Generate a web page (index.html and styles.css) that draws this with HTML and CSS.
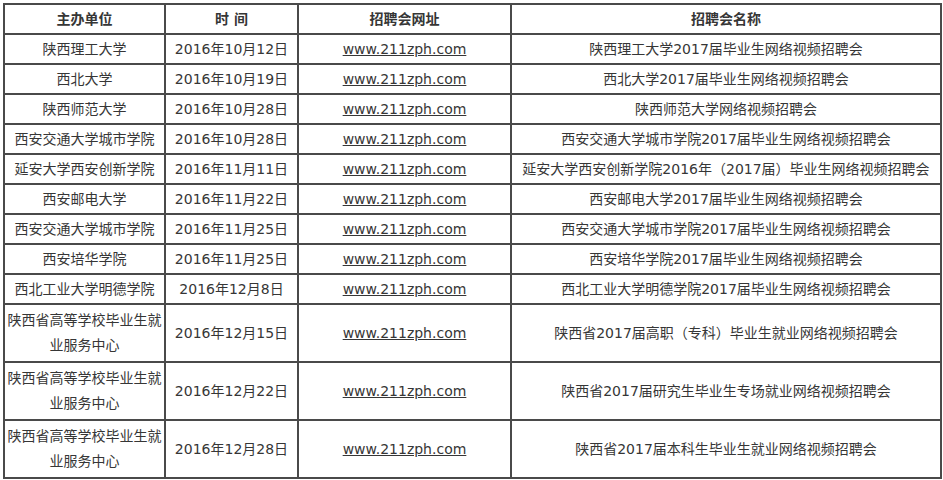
FILE: index.html
```html
<!DOCTYPE html>
<html lang="zh-CN">
<head>
<meta charset="utf-8">
<title>招聘会</title>
<link rel="stylesheet" href="styles.css">
</head>
<body>
<table class="fairs">
  <colgroup>
    <col class="c1"><col class="c2"><col class="c3"><col class="c4">
  </colgroup>
  <thead>
    <tr><th>主办单位</th><th>时 间</th><th>招聘会网址</th><th>招聘会名称</th></tr>
  </thead>
  <tbody>
    <tr><td>陕西理工大学</td><td>2016年10月12日</td><td><a href="#">www.211zph.com</a></td><td>陕西理工大学2017届毕业生网络视频招聘会</td></tr>
    <tr><td>西北大学</td><td>2016年10月19日</td><td><a href="#">www.211zph.com</a></td><td>西北大学2017届毕业生网络视频招聘会</td></tr>
    <tr><td>陕西师范大学</td><td>2016年10月28日</td><td><a href="#">www.211zph.com</a></td><td>陕西师范大学网络视频招聘会</td></tr>
    <tr><td>西安交通大学城市学院</td><td>2016年10月28日</td><td><a href="#">www.211zph.com</a></td><td>西安交通大学城市学院2017届毕业生网络视频招聘会</td></tr>
    <tr><td>延安大学西安创新学院</td><td>2016年11月11日</td><td><a href="#">www.211zph.com</a></td><td>延安大学西安创新学院2016年（2017届）毕业生网络视频招聘会</td></tr>
    <tr><td>西安邮电大学</td><td>2016年11月22日</td><td><a href="#">www.211zph.com</a></td><td>西安邮电大学2017届毕业生网络视频招聘会</td></tr>
    <tr><td>西安交通大学城市学院</td><td>2016年11月25日</td><td><a href="#">www.211zph.com</a></td><td>西安交通大学城市学院2017届毕业生网络视频招聘会</td></tr>
    <tr><td>西安培华学院</td><td>2016年11月25日</td><td><a href="#">www.211zph.com</a></td><td>西安培华学院2017届毕业生网络视频招聘会</td></tr>
    <tr><td>西北工业大学明德学院</td><td>2016年12月8日</td><td><a href="#">www.211zph.com</a></td><td>西北工业大学明德学院2017届毕业生网络视频招聘会</td></tr>
    <tr class="tall"><td>陕西省高等学校毕业生就业服务中心</td><td>2016年12月15日</td><td><a href="#">www.211zph.com</a></td><td>陕西省2017届高职（专科）毕业生就业网络视频招聘会</td></tr>
    <tr class="tall"><td>陕西省高等学校毕业生就业服务中心</td><td>2016年12月22日</td><td><a href="#">www.211zph.com</a></td><td>陕西省2017届研究生毕业生专场就业网络视频招聘会</td></tr>
    <tr class="tall"><td>陕西省高等学校毕业生就业服务中心</td><td>2016年12月28日</td><td><a href="#">www.211zph.com</a></td><td>陕西省2017届本科生毕业生就业网络视频招聘会</td></tr>
  </tbody>
</table>
</body>
</html>
```

FILE: styles.css
```css
html, body {
  margin: 0;
  padding: 0;
  background: #fff;
}
body {
  padding: 3px 0 0 3px;
  font-family: "DejaVu Sans", "Noto Sans CJK SC", sans-serif;
  font-size: 14px;
  color: #363636;
}
.fairs {
  border-collapse: separate;
  border-spacing: 0;
  table-layout: fixed;
  width: 939px;
  border-left: 2px solid #4a4a4a;
  border-top: 2px solid #4a4a4a;
}
.c1 { width: 161px; }
.c2 { width: 133px; }
.c3 { width: 213px; }
.c4 { width: 430px; }
.fairs th,
.fairs td {
  box-sizing: border-box;
  height: 30px;
  padding: 0 2px;
  border-right: 2px solid #4a4a4a;
  border-bottom: 2px solid #4a4a4a;
  text-align: center;
  vertical-align: middle;
  line-height: 28px;
  white-space: normal;
  overflow: hidden;
}
.fairs th {
  font-weight: bold;
}
.fairs .tall td {
  height: 58px;
  line-height: 25px;
}
.fairs a {
  color: #363636;
  text-decoration: underline;
}
```
